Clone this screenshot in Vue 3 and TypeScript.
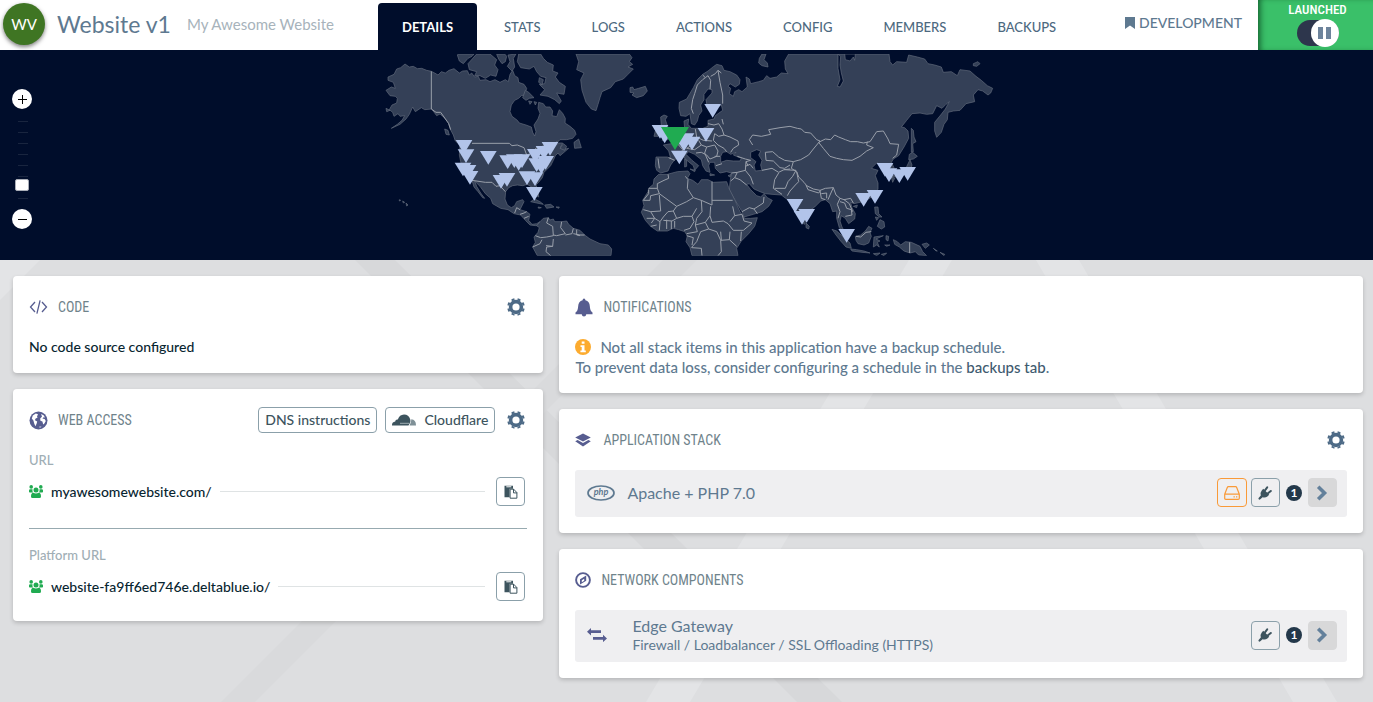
<script setup lang="ts">
import { ref } from 'vue'

interface Point {
  x: number
  y: number
}

const tabs: string[] = ['DETAILS', 'STATS', 'LOGS', 'ACTIONS', 'CONFIG', 'MEMBERS', 'BACKUPS']
const activeTab = ref('DETAILS')
const running = ref(true)
const zoomLevel = ref(2)

const urls = [
  { label: 'URL', address: 'myawesomewebsite.com/' },
  { label: 'Platform URL', address: 'website-fa9ff6ed746e.deltablue.io/' },
]

// Map coordinates: x counts from the western edge of the Americas, y from the northern edge.
const land: string[] = [
  // North and Central America
  'M75,57 88,66 100,64 112,71 125,70 140,76 154,79 164,84 174,90 184,80 196,84 207,76 222,71 228,76 238,84 248,78 262,77 268,90 275,84 284,96 295,94 300,106 318,104 330,110 345,104 360,112 376,104 385,110 390,88 398,76 404,92 414,98 416,112 432,118 440,130 434,150 424,152 416,160 404,166 394,180 390,200 396,214 412,226 418,234 438,240 454,246 458,262 464,273 468,260 462,240 474,222 480,205 474,190 476,172 490,176 497,186 510,186 518,198 516,212 530,215 538,194 548,205 556,220 555,234 570,244 584,256 588,268 578,280 560,284 540,284 528,296 520,306 536,294 548,294 542,306 556,312 566,310 552,322 540,332 534,324 526,332 520,346 512,362 500,374 492,382 487,398 476,412 468,420 474,438 476,456 466,450 458,428 442,418 428,422 412,420 398,422 386,428 377,440 375,462 382,480 394,488 404,482 410,470 428,464 432,470 424,486 420,494 440,500 450,508 446,526 456,538 470,536 480,530 478,542 466,542 450,540 436,526 422,510 402,506 384,494 362,490 338,476 332,460 316,446 300,424 284,408 290,424 302,444 314,460 308,458 294,440 282,426 276,406 262,392 248,372 242,350 238,330 240,300 226,288 220,270 212,255 205,232 195,220 180,207 170,212 155,192 134,194 124,188 106,200 98,186 88,208 78,222 60,238 34,250 52,238 66,226 74,212 60,214 54,206 42,214 38,202 28,194 36,180 50,174 52,160 46,154 30,152 18,136 34,126 46,130 40,112 24,106 24,96 42,88 50,72 62,68z',
  // South America
  'M480,530 490,520 505,518 510,525 520,522 524,530 545,530 560,528 566,538 580,550 600,556 614,570 630,582 660,596 685,600 695,612 693,632 472,632 458,606 466,592 462,576 474,562 478,548 470,542z',
  // Canadian arctic islands
  'M232,30 238,48 250,56 264,40 276,34 282,27 235,27z',
  'M282,36 264,56 268,74 290,80 284,92 300,92 316,100 332,90 348,94 354,74 344,60 350,44 330,27 290,27z',
  'M350,28 356,42 366,56 376,50 380,34 374,27z',
  'M384,30 390,50 382,64 396,78 404,66 400,40 408,27z',
  'M416,27 412,50 422,68 448,72 462,64 470,80 482,94 498,98 494,116 478,118 494,134 480,150 504,154 524,164 538,176 544,168 530,144 552,148 556,124 538,112 526,96 534,84 518,78 520,60 502,52 490,40 482,27z',
  'M436,136 446,142 462,158 448,160 438,166 428,158z',
  'M446,168 456,170 450,178z M462,170 470,172 466,180z M478,98 490,104 486,120 476,112z',
  'M194,252 204,256 208,270 198,268z M18,190 30,196 20,200z',
  'M540,310 550,296 560,304 554,316z M582,292 596,282 604,308 584,310z',
  // Caribbean and Hawaii
  'M452,470 464,462 480,470 490,478 470,474z M474,486 484,488 476,490z M494,480 512,478 522,486 500,490z M528,486 538,486 536,490z',
  'M58,464 62,466 58,468z M68,468 74,472 70,474z M78,474 84,480 80,483z',
  // Greenland
  'M588,27 596,50 590,74 612,84 602,104 606,136 618,172 634,192 648,197 654,178 660,158 666,140 692,128 706,110 730,102 744,88 760,72 744,66 758,58 748,50 756,38 748,27z',
  // Iceland
  'M750,128 758,126 762,134 776,130 796,124 802,138 790,152 770,158 756,150 762,144 750,142z',
  // Great Britain and Ireland
  'M842,216 852,210 862,214 856,224 860,236 866,252 876,262 876,278 862,284 846,286 858,274 848,264 854,254 844,242z',
  'M828,250 840,248 842,264 834,274 822,274z',
  // Eurasia
  'M1000,65 1010,58 1026,62 1032,76 1050,80 1070,90 1080,104 1078,118 1066,126 1050,116 1044,124 1052,130 1048,146 1060,154 1064,140 1076,134 1086,140 1102,126 1098,96 1108,102 1112,116 1136,110 1150,106 1160,92 1170,100 1190,96 1204,84 1224,86 1216,72 1214,48 1226,27 1527,27 1530,50 1538,60 1550,50 1580,52 1586,30 1612,36 1634,42 1644,56 1664,60 1684,66 1690,82 1714,80 1732,92 1740,74 1770,78 1788,94 1804,106 1822,122 1838,130 1832,144 1824,150 1808,138 1794,134 1780,150 1784,170 1758,176 1740,196 1720,198 1704,202 1702,224 1692,238 1684,262 1670,277 1664,258 1664,232 1682,210 1696,192 1708,170 1698,178 1686,190 1670,182 1658,206 1640,208 1620,204 1596,206 1580,226 1564,246 1574,248 1584,258 1586,280 1572,306 1556,332 1540,342 1534,352 1542,368 1542,382 1528,388 1520,372 1514,358 1502,362 1492,352 1474,370 1494,376 1486,392 1494,414 1494,432 1484,450 1462,464 1440,472 1422,476 1412,472 1416,488 1426,506 1424,522 1406,536 1396,520 1384,512 1380,528 1386,546 1398,568 1404,576 1390,562 1378,548 1370,520 1370,498 1358,500 1350,476 1336,464 1322,468 1304,486 1284,500 1280,516 1274,538 1264,532 1250,500 1242,474 1230,472 1220,462 1204,450 1176,448 1156,446 1140,440 1122,432 1108,416 1100,418 1112,434 1130,452 1142,456 1152,446 1162,458 1177,466 1166,484 1146,500 1120,508 1092,516 1086,500 1068,470 1048,436 1050,412 1054,384 1040,380 1020,384 1006,370 1004,352 990,352 986,362 990,382 978,378 968,362 964,344 944,328 926,320 918,328 936,346 956,362 944,376 940,362 916,342 906,330 884,344 872,360 864,378 842,384 830,376 826,362 828,336 862,336 872,340 866,318 850,300 874,296 892,284 910,268 914,250 912,228 926,222 924,238 934,250 968,250 984,244 984,226 1002,222 1006,212 1028,196 1024,180 1004,190 982,186 978,164 996,144 996,134 984,132 972,148 972,164 962,180 966,198 956,212 952,228 944,240 934,236 930,206 918,214 902,212 897,190 898,172 920,162 940,128 952,104 968,88 984,78z',
  // Mediterranean islands
  'M914,342 920,346 920,364 914,366z M930,372 946,376 944,380z M990,386 1004,390 990,392z M1044,392 1054,388 1050,396z',
  // Africa
  'M822,402 836,388 862,388 892,380 924,378 930,386 922,400 938,406 954,418 964,404 984,404 1000,412 1040,410 1046,428 1064,464 1080,500 1094,520 1112,520 1132,518 1124,544 1106,566 1084,588 1070,610 1074,632 936,632 930,608 918,590 922,572 914,560 896,554 880,550 862,558 832,558 812,544 796,526 784,502 792,482 788,466 804,440 806,430 820,418z',
  // Arctic Russia
  'M1138,40 1146,27 1158,27 1152,44 1162,54 1164,66 1146,62 1136,54z M1780,56 1794,50 1800,56 1790,64 1780,62z',
  // Japan and Sakhalin
  'M1594,250 1600,256 1602,276 1608,290 1598,296 1600,320 1594,322z M1588,328 1598,322 1612,334 1600,342 1586,344z M1590,344 1596,360 1590,380 1570,390 1550,396 1532,396 1550,386 1574,378z M1534,396 1544,400 1538,412z',
  // Taiwan and Hainan
  'M1482,460 1488,456 1484,472z M1420,484 1432,480 1430,488z',
  // Philippines
  'M1484,486 1494,486 1496,506 1506,516 1498,516 1486,506z M1486,516 1496,518 1490,526z M1500,524 1512,530 1514,546 1504,552 1492,544z',
  // Indonesia and New Guinea
  'M1356,553 1370,558 1392,578 1410,594 1414,610 1398,606 1382,588 1368,570z M1412,612 1430,614 1452,618 1470,624 1446,622 1416,618z M1426,574 1442,570 1456,558 1466,544 1476,550 1470,562 1474,574 1466,594 1452,600 1434,596 1428,586z M1482,576 1510,572 1488,582 1500,588 1492,592 1498,606 1490,600 1480,606z M1480,626 1500,624 1490,632z M1518,572 1526,574 1524,588 1518,584z M1514,600 1530,600 1520,604z M1504,628 1520,624 1512,632z M1540,584 1552,590 1562,600 1576,590 1594,592 1620,604 1628,620 1640,632 1616,630 1606,620 1590,624 1572,618 1558,606 1544,598z M1626,598 1640,594 1648,600 1636,610z M1660,610 1672,618 1668,618z M1680,622 1694,628 1692,632z',
  'M1278,534 1288,544 1286,552 1278,548z',
]

const water: string[] = [
  // Black Sea, Caspian Sea, Gulf of Ob
  'M1022,334 1028,322 1040,320 1052,328 1068,322 1060,330 1084,340 1080,348 1060,348 1040,346 1022,352z',
  'M1112,322 1130,314 1142,318 1136,330 1146,346 1142,360 1146,376 1126,378 1122,360 1128,350 1112,338z',
  'M1374,27 1382,34 1380,60 1384,84 1390,108 1380,126 1372,124 1380,104 1374,70z',
  'M1394,27 1396,44 1410,48 1420,36 1424,46 1426,27z',
]

const borders: string[] = [
  'M154,79 154,192 168,202 182,202 192,216 206,236 212,254',
  'M276,295 388,295 396,302 412,300 432,308 440,330 452,326 470,308 496,302 520,302 530,290',
  'M276,406 316,412 336,412 348,424 360,422 376,440',
  'M404,504 410,488 420,494 M420,508 432,504 440,500 M432,520 446,514',
  'M505,518 500,534 518,544 520,572 500,576 482,578 466,572 M498,602 518,604 520,582 M545,530 542,548 556,566 530,572 520,570 M580,550 576,566 556,570 M590,554 590,570 600,572 M458,606 480,596 486,584 M518,604 500,606 498,620 512,632 M580,566 600,570 614,570',
  'M968,90 976,98 984,92 992,106 990,132 M940,206 934,190 938,164 944,146 952,120 968,104 976,98 M992,94 1006,86 1014,76 1024,84 M1014,76 1020,112 1028,150 1028,176',
  'M984,236 1002,240 1016,236 1026,252 1032,270 1016,274 1004,266 M1026,222 1030,238 M1032,270 1050,276 1074,288 1076,300 1060,310 1052,322 M1004,266 1000,286 1014,300 1032,310 1040,320',
  'M946,252 950,276 970,286 996,288 M914,268 928,280 936,300 920,310 944,314 964,300 980,306 1004,300 1014,318 1010,334 990,342 980,330 964,322 948,324 M964,300 956,286 M980,306 974,324 986,352 M1004,334 1020,334 M904,286 896,300 908,314 902,326 M866,338 884,346 M834,340 838,370',
  'M1072,334 1096,342 1112,346 1098,350 1104,362 M1096,364 1110,358 1120,370 M1008,362 1026,356 M1098,350 1096,376 1072,382 1054,384 M1072,382 1064,398 1052,408 M1064,398 1080,404 1100,420 M1096,376 1112,396 1120,418',
  'M1086,500 1108,488 1122,492 1150,474 1152,456 M1122,492 1132,506',
  'M1118,300 1108,284 1118,270 1144,274 1172,268 1166,254 1200,248 1230,244 1252,250 1264,252 1274,262 1292,264 1310,284 1320,288 1300,312 1286,330 1262,344 1240,350 M1156,322 1178,320 1196,336 1214,346 1240,350 M1156,322 1158,346 1180,348 1200,368 1214,370 1230,360 M1146,376 1176,370 1196,382 1212,374 1230,372 M1184,404 1180,430 1206,448 M1184,404 1196,384 M1212,374 1248,376 1238,394 1224,410 1216,430 1184,430',
  'M1316,292 1336,282 1352,284 1364,270 1376,276 1396,284 1412,290 1432,290 1450,294 1470,290 1490,260 1510,258 1524,282 1530,296 1556,298 1550,330 1538,340 M1316,292 1330,310 1350,334 1370,340 1390,344 1416,346 1440,334 1460,318 1480,308 1460,300 1462,290',
  'M1240,350 1234,370 1250,380 1256,396 1272,412 1280,422 1300,432 1320,436 1336,430 1360,428 M1250,380 1256,410 1246,420 1230,438 1222,452 M1278,420 1284,434 1316,444 1322,436 M1320,438 1324,460 1336,464 M1324,446 1340,444 1340,460 M1360,428 1368,450 1380,460 1392,464 1412,460 1420,474 M1360,428 1350,450 1344,464 M1380,460 1372,478 1380,500 1374,520 M1380,470 1394,474 1400,490 1414,494 1416,510 1396,514 M1392,464 1408,476 1418,500 M1428,574 1442,576 1458,562 1474,560',
  'M806,430 832,430 832,416 852,406 866,400 864,388 M832,430 838,446 890,484 920,470 940,458 M806,434 806,446 790,466 810,466 812,452 838,446 M838,450 842,498 812,500 790,494 M940,458 964,466 996,480 996,410 M940,458 922,430 924,404 916,394 M996,466 1058,466 M890,484 880,498 864,500 850,516 840,530 824,520 812,500 M880,498 890,520 876,528 850,526 M890,520 910,514 936,514 950,490 M936,514 942,530 930,550 912,556 M964,466 966,500 950,520 946,540 976,532 990,512 992,484 M990,512 996,532 1030,528 1044,536 1060,556 1090,556 1116,534 1092,528 1086,508 1064,512 1050,530 M1064,512 1058,484 M976,532 986,552 1010,560 1022,586 1024,620 1014,632 M986,552 962,560 950,590 934,608 M946,540 952,560 920,566 M1022,560 1024,586 M1050,560 1048,584 1070,604 M1084,560 1082,588 M1022,586 1048,584 M936,608 964,610 966,632 M920,572 940,578 936,600 M860,524 860,552 M874,528 874,552 M884,528 884,548 M840,530 838,556 M800,520 824,520 814,534 M830,540 812,544',
  'M1589,592 1589,624',
]

const nodes: Point[] = [
  { x: 252, y: 285 }, { x: 258, y: 313 }, { x: 325, y: 318 }, { x: 249, y: 353 }, { x: 264, y: 360 },
  { x: 270, y: 378 }, { x: 363, y: 390 }, { x: 381, y: 384 }, { x: 383, y: 331 }, { x: 403, y: 328 },
  { x: 426, y: 328 }, { x: 416, y: 336 }, { x: 466, y: 312 }, { x: 492, y: 303 }, { x: 510, y: 291 },
  { x: 497, y: 333 }, { x: 484, y: 346 }, { x: 470, y: 340 }, { x: 441, y: 379 }, { x: 465, y: 382 },
  { x: 463, y: 426 }, { x: 840, y: 240 }, { x: 854, y: 254 }, { x: 998, y: 177 }, { x: 978, y: 249 },
  { x: 898, y: 317 }, { x: 918, y: 265 }, { x: 912, y: 278 }, { x: 936, y: 275 }, { x: 1245, y: 462 },
  { x: 1266, y: 498 }, { x: 1280, y: 492 }, { x: 1400, y: 552 }, { x: 1451, y: 444 }, { x: 1485, y: 435 },
  { x: 1515, y: 354 }, { x: 1527, y: 370 }, { x: 1558, y: 373 }, { x: 1583, y: 366 },
]

const triangle = (p: Point, half: number, height: number): string =>
  `M${p.x - half},${p.y} H${p.x + half} L${p.x},${p.y + height}z`
</script>

<template>
  <svg class="defs" aria-hidden="true">
    <symbol id="gear" viewBox="0 0 18 18">
      <circle cx="9" cy="9" r="5.400" fill="none" stroke="currentColor" stroke-width="3.600" />
      <circle cx="9" cy="9" r="7.800" fill="none" stroke="currentColor" stroke-width="2" pathLength="16" stroke-dasharray="1 1" transform="rotate(11.250 9 9)" />
    </symbol>
    <symbol id="clipboard" viewBox="0 0 14 14">
      <path d="M.5.8H9v3H5.600v8.400H.5z" />
      <path d="M2.300 1.300h5v1h-5z" fill="#fff" />
      <path d="M6.100 4.200h3.600l3.200 3.400v5.600H6.100z" fill="#fff" stroke="currentColor" />
      <path d="M9.500 4v3.900h3.600" fill="none" stroke="currentColor" />
    </symbol>
    <symbol id="users" viewBox="0 0 14 13">
      <circle cx="2.200" cy="1.900" r="1.800" /><circle cx="11.800" cy="1.900" r="1.800" />
      <path d="M0 6.800V5.500q0-1.300 1.200-1.300h2.300q-.5 2.300.7 3.200H.8Q0 7.400 0 6.800zM14 6.800V5.500q0-1.300-1.200-1.300h-2.300q.5 2.300-.7 3.200h3.400q.8 0 .8-.6z" />
      <circle cx="7" cy="5" r="2.500" />
      <path d="M2 11.500q0-3.700 2.300-3.700Q7 9.400 9.700 7.800 12 7.800 12 11.500q0 1.500-1.500 1.500h-7Q2 13 2 11.500z" />
    </symbol>
    <symbol id="plug" viewBox="0 0 14 14">
      <path d="M5.200 2.800 11.200 8.800 9.400 10.400Q7.200 12.200 4.600 11.200L2 13.600Q.4 14 .4 12.200L2.800 9.600Q1.800 7 3.600 4.800z" />
      <path d="M6.600 4.800 9.200 1.400M9.400 7.800 12.800 5" fill="none" stroke="currentColor" stroke-width="2" stroke-linecap="round" />
    </symbol>
    <symbol id="chevron" viewBox="0 0 12 16">
      <path d="M2.200 1.800 8.500 8 2.200 14.200" fill="none" stroke="currentColor" stroke-width="3.600" />
    </symbol>
  </svg>

  <div class="page">
    <header class="topbar">
      <div class="brand">
        <span class="avatar">WV</span>
        <h1>Website v1</h1>
        <span class="subtitle">My Awesome Website</span>
      </div>
      <nav class="tabs">
        <button
          v-for="tab in tabs"
          :key="tab"
          type="button"
          :class="{ active: tab === activeTab }"
          @click="activeTab = tab"
        >{{ tab }}</button>
      </nav>
      <div class="environment">
        <svg viewBox="0 0 10 12" width="10" height="12" aria-hidden="true"><path d="M0 0h10v12L5 8.500 0 12z" fill="currentColor" /></svg>
        DEVELOPMENT
      </div>
      <label class="status">
        <span>LAUNCHED</span>
        <input v-model="running" type="checkbox" />
        <span class="switch" aria-hidden="true"><i class="knob"></i></span>
      </label>
    </header>

    <section class="map">
      <div class="zoom">
        <button type="button" aria-label="Zoom in" @click="zoomLevel++">
          <svg viewBox="0 0 20 20" aria-hidden="true"><path d="M6 10.500h9M10.500 6v9" stroke="#000" fill="none" /></svg>
        </button>
        <input v-model.number="zoomLevel" type="range" min="0" max="10" aria-label="Zoom level" />
        <button type="button" aria-label="Zoom out" @click="zoomLevel--">
          <svg viewBox="0 0 20 20" aria-hidden="true"><path d="M6 10.500h9" stroke="#000" fill="none" /></svg>
        </button>
      </div>
      <svg class="world" viewBox="-12 15 1863 630" role="img" aria-label="Server locations">
        <defs><clipPath id="frame"><rect x="0" y="27" width="1851" height="605" /></clipPath></defs>
        <g clip-path="url(#frame)">
          <path v-for="(d, i) in land" :key="'l' + i" :d="d" class="land" />
          <path v-for="(d, i) in water" :key="'w' + i" :d="d" class="water" />
          <path v-for="(d, i) in borders" :key="'b' + i" :d="d" class="border" />
        </g>
        <path v-for="(p, i) in nodes" :key="'n' + i" :d="triangle(p, 25, 41)" class="node" />
        <path :d="triangle({ x: 885, y: 246 }, 42, 69)" class="home" />
      </svg>
    </section>

    <main class="content">
      <svg class="bands" viewBox="0 0 1373 442" preserveAspectRatio="xMinYMin slice" aria-hidden="true">
        <path d="M355 0h40L842 442H797z" fill="#d7d8da" />
        <path d="M663 0h34L255 442h-34z" fill="#d9dadc" />
        <path d="M909 0h43L690 442h-44zM1036 0h43l258 442h-44zM0 0h40L0 40z" fill="#e3e4e6" />
      </svg>
      <div class="column">
        <section class="card">
          <div class="card-head">
            <svg class="icon" viewBox="0 0 18 14" width="19" height="14" aria-hidden="true"><path d="M5.500 2 1 7l4.500 5M12.500 2 17 7l-4.500 5M10.600.4 7.400 13.600" fill="none" stroke="currentColor" stroke-width="1.300" /></svg>
            <h2>CODE</h2>
            <button type="button" class="gear" aria-label="Code settings"><svg><use href="#gear" /></svg></button>
          </div>
          <p class="strong">No code source configured</p>
        </section>

        <section class="card access">
          <div class="card-head">
            <svg class="icon" viewBox="0 0 19 19" width="19" height="19" aria-hidden="true">
              <circle cx="9.500" cy="9.500" r="9" fill="currentColor" />
              <path d="M3.800 4.600 6.800 2.600 9 3.200 8 5.400 8.600 6.600 6.400 7.800 6 9.200 8.200 10.400 7.600 12.800 6.400 15.200 5.200 12.600 4.400 9.600 2.800 7.400zM12 3 14.600 4.200 16 6.400 14.600 6.200 13.400 7.400 15.600 8 16.800 10 15.400 12.400 14.200 13.600 13.400 10.600 11.400 9.800 11.200 7.400 13 5.600zM10 15.800l2.600-.2-1.600 1.100z" fill="#fff" />
            </svg>
            <h2>WEB ACCESS</h2>
            <div class="head-actions">
              <button type="button" class="pill">DNS instructions</button>
              <button type="button" class="pill cloud">
                <svg viewBox="0 0 24 12" width="24" height="12" aria-hidden="true">
                  <path d="M0 11.500Q-.2 8 3.200 7.400 3.400 5.200 5.800 5.500 7.400.7 12 .5q4.800.1 6.200 4.700.7 2.600-.5 4.300L16.500 11.500z" fill="currentColor" />
                  <path d="M17.500 11.500Q19.500 8 19.300 5.200 24 5.400 24 11.500z" fill="#7f9097" />
                  <path d="M8 9.300h9.500" stroke="#b8c3c7" stroke-width=".8" />
                </svg>
                Cloudflare
              </button>
              <button type="button" class="gear" aria-label="Web access settings"><svg><use href="#gear" /></svg></button>
            </div>
          </div>
          <div v-for="item in urls" :key="item.label" class="entry">
            <h3>{{ item.label }}</h3>
            <div class="entry-row">
              <svg class="users" aria-hidden="true"><use href="#users" /></svg>
              <a href="#">{{ item.address }}</a>
              <span class="rule"></span>
              <button type="button" class="square" :aria-label="'Copy ' + item.label"><svg><use href="#clipboard" /></svg></button>
            </div>
          </div>
        </section>
      </div>

      <div class="column">
        <section class="card">
          <div class="card-head">
            <svg class="icon" viewBox="0 0 18 19" width="18" height="19" aria-hidden="true"><path d="M.5 16.200V14.500Q3 13 3.200 8 3.400 3.300 7.600 2.200 7.600.6 9 .5q1.400.1 1.400 1.700 4.200 1.100 4.400 5.800.2 5 2.700 6.500v1.700h-6.200Q11 18.600 9 18.600t-2.300-2.400z" fill="currentColor" /></svg>
            <h2>NOTIFICATIONS</h2>
          </div>
          <div class="notice">
            <p>
              <svg viewBox="0 0 16 16" width="16" height="16" aria-hidden="true">
                <circle cx="8" cy="8" r="8" fill="#fcab2f" />
                <path d="M6.700 2.500h2.800v2.300H6.700zM5.500 6.200h4v5.200h1.300v1.900H5.400v-1.900h1.300V8.100H5.500z" fill="#fff" />
              </svg>
              Not all stack items in this application have a backup schedule.
            </p>
            <span>To prevent data loss, consider configuring a schedule in the <a href="#">backups tab</a>.</span>
          </div>
        </section>

        <section class="card">
          <div class="card-head">
            <svg class="icon" viewBox="0 0 16 14" width="16" height="14" aria-hidden="true"><path d="M8 .5 15.800 4.500 8 8.500.2 4.500zM.2 8.200 2.600 7 8 9.900 13.400 7l2.400 1.200L8 13.500z" fill="currentColor" /></svg>
            <h2 class="wide">APPLICATION STACK</h2>
            <button type="button" class="gear" aria-label="Stack settings"><svg><use href="#gear" /></svg></button>
          </div>
          <div class="item">
            <svg class="php" viewBox="0 0 28 16" width="28" height="16" aria-hidden="true">
              <ellipse cx="14" cy="8" rx="13" ry="7" fill="none" stroke="currentColor" stroke-width="1.700" />
              <text x="14" y="10" text-anchor="middle">php</text>
            </svg>
            <div class="item-text"><strong>Apache + PHP 7.0</strong></div>
            <button type="button" class="square drive" aria-label="Storage">
              <svg viewBox="0 0 16 14" aria-hidden="true"><path d="M.7 8.200 3.200 1.700Q3.600.7 4.400.7h7.200q.8 0 1.200 1l2.500 6.500v4q0 1.100-1.100 1.100H1.800Q.7 13.300.7 12.200zM.7 8.200h14.600M9.500 10.800h1.300M12 10.800h1.300" fill="none" stroke="currentColor" stroke-width="1.200" /></svg>
            </button>
            <button type="button" class="square" aria-label="Connections"><svg><use href="#plug" /></svg></button>
            <span class="badge">1</span>
            <button type="button" class="square open" aria-label="Open Apache + PHP 7.0"><svg><use href="#chevron" /></svg></button>
          </div>
        </section>

        <section class="card">
          <div class="card-head">
            <svg class="icon" viewBox="0 0 16 16" width="16" height="16" aria-hidden="true"><circle cx="8" cy="8" r="6.900" fill="none" stroke="currentColor" stroke-width="1.900" /><path fill-rule="evenodd" d="M11.200 3.600v5.200L5 12.400V7.200zM6.800 8.200v2l2.400-1.400v-2z" fill="currentColor" /></svg>
            <h2>NETWORK COMPONENTS</h2>
          </div>
          <div class="item tall">
            <svg class="arrows" viewBox="0 0 20 14" width="20" height="14" aria-hidden="true"><path d="M0 3.700 4 0v2.200h10v2.900H4v2.300zM20 10.400l-4 3.700v-2.300H6V8.900h10V6.700z" fill="currentColor" /></svg>
            <div class="item-text">
              <strong>Edge Gateway</strong>
              <small>Firewall / Loadbalancer / SSL Offloading (HTTPS)</small>
            </div>
            <button type="button" class="square" aria-label="Connections"><svg><use href="#plug" /></svg></button>
            <span class="badge">1</span>
            <button type="button" class="square open" aria-label="Open Edge Gateway"><svg><use href="#chevron" /></svg></button>
          </div>
        </section>
      </div>
    </main>
  </div>
</template>

<style>
body {
  margin: 0;
  background: #dddee0;
}
</style>

<style scoped>
* {
  box-sizing: border-box;
}
button {
  margin: 0;
  padding: 0;
  border: 0;
  background: none;
  font: inherit;
  color: inherit;
  cursor: pointer;
}
h1, h2, h3, p {
  margin: 0;
  font-weight: 400;
}
a {
  color: inherit;
  text-decoration: none;
}
svg {
  flex: none;
}
.defs {
  position: absolute;
  width: 0;
  height: 0;
}
.page {
  display: flex;
  flex-direction: column;
  min-height: 100vh;
  font-family: Lato, "Open Sans", sans-serif;
  font-size: 14px;
  line-height: 20px;
  color: #5e7990;
}

.topbar {
  display: flex;
  height: 50px;
  background: #fff;
}
.brand {
  display: flex;
  align-items: center;
  width: 378px;
  height: 48px;
  padding-left: 3px;
  white-space: nowrap;
}
.avatar {
  position: relative;
  z-index: 1;
  width: 42px;
  height: 42px;
  border-radius: 50%;
  background: #3f7523;
  box-shadow: 0 2px 4px rgba(0, 0, 0, 0.5);
  color: #fff;
  font-size: 15px;
  line-height: 42px;
  text-align: center;
}
h1 {
  margin: 0 16px 0 12px;
  font-size: 23px;
  line-height: 30px;
}
.subtitle {
  font-size: 15px;
  color: #a7b3bb;
}
.tabs {
  display: flex;
  gap: 3px;
  padding-top: 3px;
}
.tabs button {
  padding: 0 24px;
  border-radius: 4px 4px 0 0;
  font-size: 13px;
  font-weight: 500;
  color: #4d6980;
}
.tabs button.active {
  background: #000d2b;
  color: #fff;
  font-weight: 700;
}
.environment {
  display: flex;
  align-items: center;
  gap: 4px;
  height: 46px;
  margin-left: auto;
  margin-right: 16px;
  font-weight: 500;
}
.status {
  position: relative;
  display: flex;
  flex-direction: column;
  align-items: center;
  width: 115px;
  padding: 1px 0 0 4px;
  background: #3ac069;
  box-shadow: inset 5px 0 6px -3px rgba(0, 50, 20, 0.7);
  color: #fff;
  font: 500 13px/18px "Roboto Condensed", "Liberation Sans Narrow", Roboto, sans-serif;
}
.status input {
  position: absolute;
  opacity: 0;
}
.switch {
  display: flex;
  justify-content: flex-end;
  align-items: center;
  width: 42px;
  height: 26px;
  margin-top: 1px;
  border-radius: 13px;
  background: #2d364c;
}
.knob {
  width: 28px;
  height: 28px;
  border-radius: 50%;
  background:
    linear-gradient(#6d839b, #6d839b) 7px 8px / 5px 12px no-repeat,
    linear-gradient(#6d839b, #6d839b) 15px 8px / 5px 12px no-repeat,
    #fff;
}

.map {
  position: relative;
  display: flex;
  justify-content: center;
  height: 210px;
  background: #000d2b;
}
.world {
  height: 210px;
  width: 621px;
}
.land {
  fill: #344057;
  stroke: #646c7d;
  stroke-width: 2;
}
.water {
  fill: #000d2b;
  stroke: #646c7d;
  stroke-width: 2;
}
.border {
  fill: none;
  stroke: #999faa;
  stroke-width: 3;
}
.node {
  fill: #b2c4ea;
}
.home {
  fill: #20ab51;
}
.zoom {
  position: absolute;
  left: 12px;
  top: 39px;
  display: flex;
  flex-direction: column;
  align-items: center;
}
.zoom button {
  width: 20px;
  height: 20px;
  border-radius: 50%;
  background: #fff;
}
.zoom button svg {
  display: block;
  width: 20px;
  height: 20px;
}
.zoom input {
  appearance: none;
  writing-mode: vertical-lr;
  direction: rtl;
  width: 20px;
  height: 100px;
  margin: 0;
  background: repeating-linear-gradient(#19253f 0 1px, transparent 1px 11px) 6px 12px / 10px 88px no-repeat;
}
.zoom input::-webkit-slider-thumb {
  appearance: none;
  width: 14px;
  height: 12px;
  border: 1px solid #a9adb7;
  border-radius: 2px;
  background: #fff;
}

.content {
  position: relative;
  flex: 1;
  display: grid;
  grid-template-columns: 33fr 50fr;
  gap: 16px;
  align-items: start;
  padding: 16px 10px 24px 13px;
}
.bands {
  position: absolute;
  inset: 0;
  width: 100%;
  height: 100%;
}
.column {
  position: relative;
  display: flex;
  flex-direction: column;
  gap: 16px;
  min-width: 0;
}
.card {
  padding: 16px;
  border-radius: 4px;
  background: #fff;
  box-shadow: 0 2px 4px rgba(0, 0, 0, 0.18);
}
.card-head {
  display: flex;
  align-items: center;
  gap: 10px;
  height: 30px;
  margin-bottom: 15px;
}
.icon {
  color: #575d90;
}
h2 {
  font: 400 14px/20px "Roboto Condensed", "Liberation Sans Narrow", Roboto, sans-serif;
  color: #6f838b;
}
h2.wide {
  margin-left: 2px;
}
.gear {
  width: 18px;
  height: 18px;
  margin: 0 2px 0 auto;
  color: #4d6a86;
}
.gear svg {
  display: block;
  width: 18px;
  height: 18px;
}
.strong {
  font-weight: 500;
  color: #082530;
}
.head-actions {
  display: flex;
  align-items: center;
  gap: 8px;
  margin-left: auto;
}
.head-actions .gear {
  margin-left: 4px;
}
.pill {
  display: flex;
  align-items: center;
  gap: 8px;
  height: 26px;
  padding: 0 6px;
  border: 1px solid #8ba0aa;
  border-radius: 4px;
  color: #3d545e;
  font-weight: 500;
}
.access {
  padding-bottom: 20px;
}
.entry + .entry {
  margin-top: 22px;
  padding-top: 16px;
  border-top: 1px solid #97aab0;
}
h3 {
  margin-bottom: 7px;
  font-size: 13px;
  line-height: 20px;
  font-weight: 500;
  color: #a0aeb5;
}
.entry-row {
  display: flex;
  align-items: center;
  height: 29px;
  padding-right: 2px;
  font-weight: 500;
  color: #082530;
}
.users {
  width: 14px;
  height: 13px;
  margin-right: 8px;
  fill: #20ab51;
}
.rule {
  flex: 1;
  height: 1px;
  margin: 0 11px 0 8px;
  background: #dfe3e4;
}
.square {
  display: flex;
  align-items: center;
  justify-content: center;
  width: 29px;
  height: 29px;
  border: 1px solid #8ba0aa;
  border-radius: 4px;
  color: #3d545e;
}
.square svg {
  width: 14px;
  height: 14px;
  fill: currentColor;
}
.square.drive {
  width: 30px;
  border-color: #f99a38;
  color: #f99a38;
}
.square.drive svg {
  width: 16px;
}
.square.open {
  border-color: #d8d8d9;
  background: #d8d8d9;
  color: #63809b;
}
.square.open svg {
  width: 12px;
  height: 16px;
}
.notice {
  font-size: 15px;
  font-weight: 500;
}
.notice p {
  display: flex;
  align-items: center;
  gap: 9px;
  height: 20px;
  font-weight: 500;
}
.notice a {
  color: #3f5b70;
}
.item {
  display: flex;
  align-items: center;
  gap: 4px;
  height: 47px;
  padding: 0 10px 2px 12px;
  border-radius: 3px;
  background: #efeff1;
}
.item.tall {
  height: 52px;
}
.item-text {
  flex: 1;
  display: flex;
  flex-direction: column;
  margin-left: 8px;
}
.tall .item-text {
  margin-left: 21px;
}
.item-text strong {
  font-size: 16px;
  line-height: 20px;
  font-weight: 400;
}
.item-text small {
  font-size: 14px;
  line-height: 18px;
}
.php text {
  font: italic 700 9px Lato, sans-serif;
  fill: currentColor;
}
.arrows {
  color: #575d90;
}
.badge {
  width: 16px;
  height: 16px;
  margin: 0 2px;
  border-radius: 50%;
  background: #23384a;
  color: #fff;
  font-size: 12px;
  font-weight: 700;
  line-height: 16px;
  text-align: center;
}
</style>
